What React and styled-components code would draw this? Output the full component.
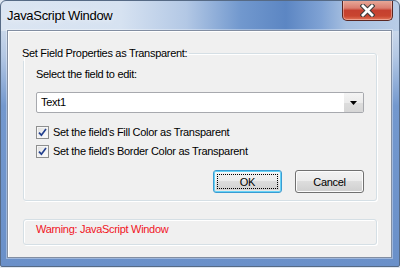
import React from 'react';
import styled, { createGlobalStyle } from 'styled-components';

const GlobalStyle = createGlobalStyle`
  html, body {
    margin: 0;
    padding: 0;
    background: #dfe7f1;
  }
  body {
    width: 400px;
    height: 268px;
    overflow: hidden;
    font-family: "Liberation Sans", Arial, sans-serif;
    font-size: 11px;
    letter-spacing: -0.3px;
    color: #000;
  }
`;

const Frame = styled.div`
  box-sizing: border-box;
  width: 400px;
  height: 267px;
  border: 1px solid #566a85;
  border-radius: 6px 6px 2px 2px;
  padding: 0 7px 8px 6px;
  display: flex;
  flex-direction: column;
  overflow: hidden;
  background:
    linear-gradient(to right,
      #dbe5f2 0px, #d6e2f1 120px, #b3c8e5 185px, #7198ce 240px,
      #5c86c3 285px, #7fa2d4 320px, #a6bfe0 345px, #b9cde7 400px)
      top left / 100% 30px no-repeat,
    linear-gradient(to bottom, #c9d7ea 30px, #b4c8e4 55px, #7398ce 105px, #6a90c9 100%);
`;

const TitleBar = styled.div`
  height: 29px;
  display: flex;
  align-items: flex-start;
  flex-shrink: 0;
`;

const Title = styled.div`
  padding-top: 5px;
  font-size: 13px;
  letter-spacing: -0.3px;
  line-height: 20px;
  color: #000;
  text-shadow: 0 0 6px rgba(255, 255, 255, 0.9);
`;

const CloseButton = styled.button`
  margin: -1px -1px 0 auto;
  width: 51px;
  height: 21px;
  padding: 0;
  border: 1px solid #5a2722;
  border-top: none;
  border-radius: 0 0 5px 5px;
  display: flex;
  align-items: center;
  justify-content: center;
  background: linear-gradient(to bottom,
    #e8ad9d 0%, #da7e70 40%, #c5402f 52%, #c8452f 80%, #e2765a 100%);
  box-shadow: inset 0 0 0 1px rgba(255, 220, 210, 0.45);
`;

const Client = styled.div`
  box-sizing: border-box;
  height: 229px;
  border: 1px solid rgba(40, 62, 98, 0.55);
  box-shadow: inset 1px 1px 0 #fff, 0 0 0 1px rgba(255, 255, 255, 0.35);
  background: #f0f0f0;
  padding: 15px 14px 0 15px;
  display: flex;
  flex-direction: column;
`;

const Group = styled.fieldset`
  margin: 0;
  padding: ${p => p.$pad};
  border: 1px solid #d5dfe5;
  border-radius: 3px;
  box-shadow: inset 1px 1px 0 #fff, 1px 1px 0 #fff;
  min-width: 0;
`;

const Caption = styled.legend`
  padding: 0 2px;
  margin-left: -8px;
  line-height: 15px;
`;

const Label = styled.div`
  line-height: 15px;
`;

const Select = styled.div`
  margin-top: 10px;
  height: 21px;
  box-sizing: border-box;
  border: 1px solid #a7a9ae;
  border-radius: 2px;
  background: #fff;
  display: flex;
  align-items: stretch;
`;

const SelectValue = styled.div`
  flex: 1;
  padding-left: 4px;
  line-height: 19px;
`;

const SelectArrow = styled.div`
  width: 19px;
  display: flex;
  align-items: center;
  justify-content: center;
  border-radius: 0 1px 1px 0;
  background: linear-gradient(to bottom, #f4f4f4 0%, #ebebeb 50%, #dddddd 51%, #d6d6d6 100%);
`;

const CheckList = styled.div`
  margin-top: 12px;
  display: flex;
  flex-direction: column;
  gap: 4px;
`;

const CheckRow = styled.label`
  display: flex;
  align-items: center;
  gap: 4px;
  height: 15px;
  line-height: 15px;
`;

const CheckBox = styled.span`
  box-sizing: border-box;
  width: 13px;
  height: 13px;
  border: 1px solid #8e8f8f;
  background: linear-gradient(135deg, #dcdcdc 0%, #f4f4f4 60%, #ffffff 100%);
  box-shadow: inset 0 0 0 1px #f6f6f6;
  display: flex;
  align-items: center;
  justify-content: center;
`;

const Buttons = styled.div`
  margin-top: 11px;
  display: flex;
  justify-content: flex-end;
  gap: 13px;
`;

const Button = styled.button`
  box-sizing: border-box;
  width: 69px;
  height: 23px;
  padding: 0;
  font-family: inherit;
  font-size: 11px;
  letter-spacing: inherit;
  color: #000;
  border-radius: 3px;
  border: 1px solid ${p => (p.$default ? '#3a9bd2' : '#707070')};
  background: linear-gradient(to bottom, #f2f2f2 0%, #ebebeb 49%, #dddddd 50%, #cfcfcf 100%);
  box-shadow: ${p => (p.$default
    ? 'inset 0 0 0 1px #67d3f6, inset 0 0 0 2px rgba(255,255,255,0.5)'
    : 'inset 0 0 0 1px #fcfcfc')};
  display: flex;
  align-items: center;
  justify-content: center;
`;

const Focus = styled.span`
  box-sizing: border-box;
  width: calc(100% - 6px);
  height: calc(100% - 6px);
  border: 1px dotted #000;
  display: flex;
  align-items: center;
  justify-content: center;
`;

const Warning = styled.div`
  color: #f0141e;
  line-height: 15px;
`;

function Check() {
  return (
    <CheckBox>
      <svg width="9" height="9" viewBox="0 0 9 9">
        <path d="M1 4.6 L3.4 7.2 L8 1" fill="none" stroke="#24418f" strokeWidth="1.7" />
      </svg>
    </CheckBox>
  );
}

export default function App() {
  return (
    <>
      <GlobalStyle />
      <Frame>
        <TitleBar>
          <Title>JavaScript Window</Title>
          <CloseButton aria-label="Close">
            <svg width="15" height="13" viewBox="0 0 15 13">
              <path d="M3 2 L12 11 M12 2 L3 11" stroke="#3b3b3b" strokeWidth="4.8" strokeLinecap="square" />
              <path d="M3 2 L12 11 M12 2 L3 11" stroke="#fff" strokeWidth="2.8" strokeLinecap="square" />
            </svg>
          </CloseButton>
        </TitleBar>
        <Client>
          <Group $pad="6px 12px 7px 4px">
            <Caption>Set Field Properties as Transparent:</Caption>
            <div style={{ paddingLeft: 8 }}>
              <Label>Select the field to edit:</Label>
              <Select>
                <SelectValue>Text1</SelectValue>
                <SelectArrow>
                  <svg width="7" height="4" viewBox="0 0 7 4">
                    <path d="M0 0 H7 L3.5 4 Z" fill="#000" />
                  </svg>
                </SelectArrow>
              </Select>
              <CheckList>
                <CheckRow><Check />Set the field's Fill Color as Transparent</CheckRow>
                <CheckRow><Check />Set the field's Border Color as Transparent</CheckRow>
              </CheckList>
              <Buttons>
                <Button $default><Focus>OK</Focus></Button>
                <Button>Cancel</Button>
              </Buttons>
            </div>
          </Group>
          <Group $pad="2px 12px 7px 12px" style={{ marginTop: 18 }}>
            <Warning>Warning: JavaScript Window</Warning>
          </Group>
        </Client>
      </Frame>
    </>
  );
}
